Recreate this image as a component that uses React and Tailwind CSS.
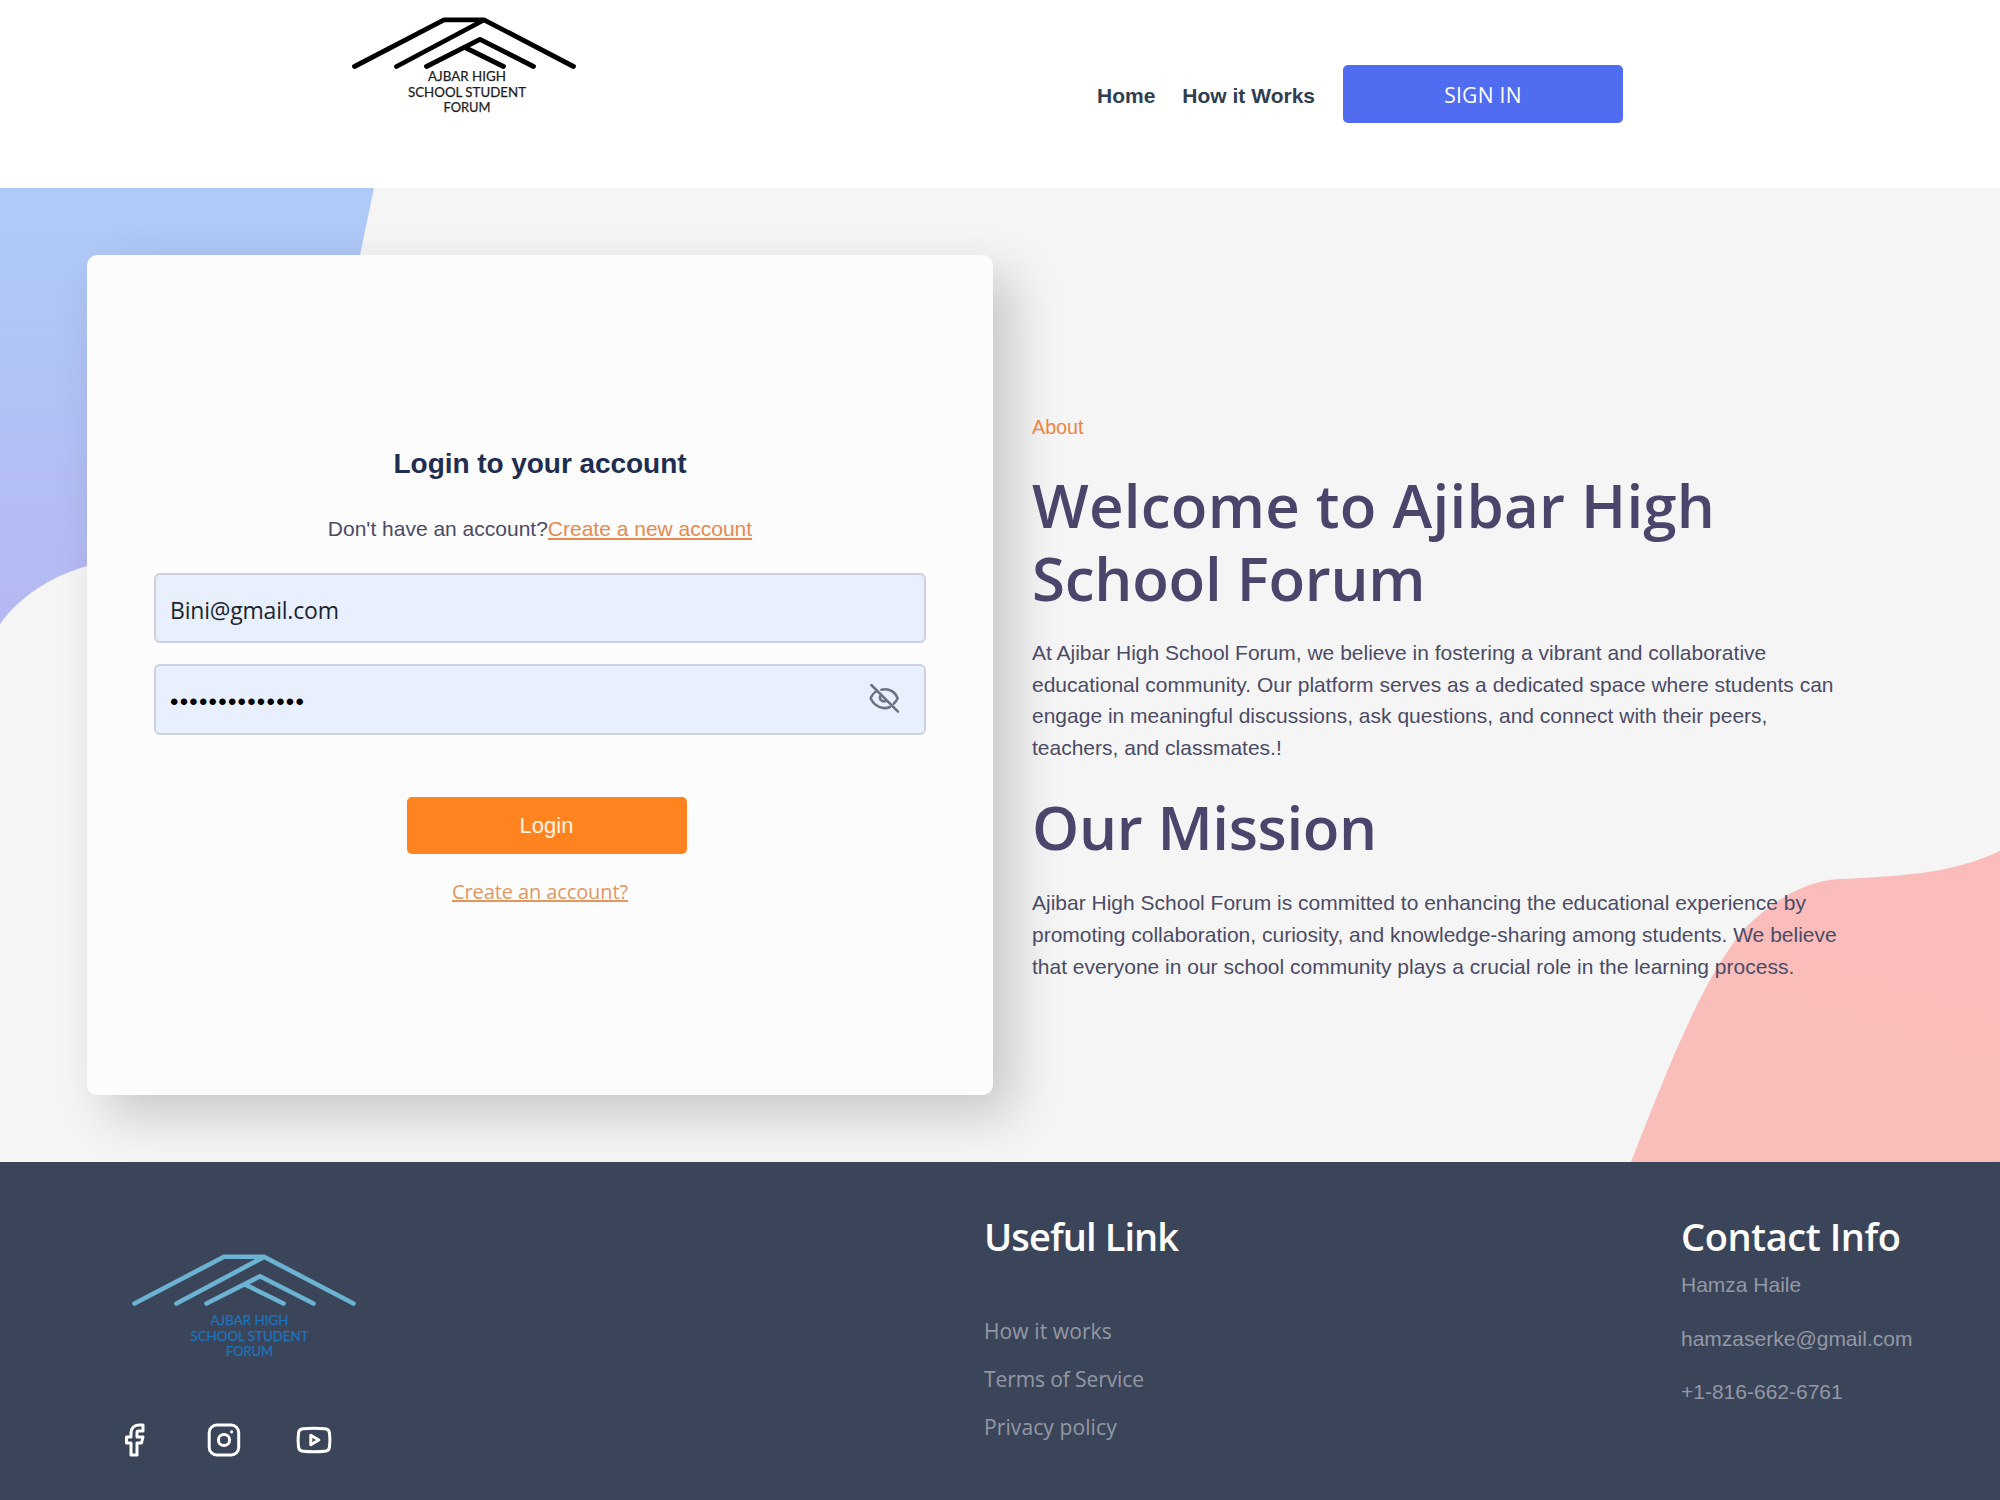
import React from "react";
import { Facebook } from "lucide-react";

function Logo({ stroke, fill, gap = 0, strokeWidth = 4.8, textX = 117 }) {
  const lines = [
    ["AJBAR HIGH", 66, 78],
    ["SCHOOL STUDENT", 81.7, 118],
    ["FORUM", 97.4, 47],
  ];
  return (
    <svg width="230" height="112" viewBox="0 0 230 112" className="block shrink-0">
      <g fill="none" stroke={stroke} strokeWidth={strokeWidth} strokeLinecap="round" strokeLinejoin="round">
        <path d="M4.500 51.500L94 4.800H134L223.500 51.500" />
        <path d="M46.500 51.500L133 5.500" />
        <path d="M76.500 51.500L130 24.300L183.500 51.500" />
        <path d="M115 32.500L153.500 51.500" />
      </g>
      <g fill={fill} stroke={fill} strokeWidth="0.250" fontFamily="Lato, sans-serif" fontSize="14" textAnchor="middle">
        {lines.map(([text, y, w]) => (
          <text key={text} x={textX} y={y + gap} textLength={w} lengthAdjust="spacingAndGlyphs">
            {text}
          </text>
        ))}
      </g>
    </svg>
  );
}

function EyeOff() {
  return (
    <svg width="31" height="31" viewBox="56 68 93 93" fill="none" stroke="#6b7280" strokeWidth="7.500" strokeLinecap="round">
      <path d="M63 74L143 154" />
      <path d="M93 88C118 82 136 97 142 114C139 121 135 126 130 130" />
      <path d="M80 92C71 97 64 105 61 114C72 139 98 149 119 140" />
      <path d="M92 103C84 114 92 127 107 122" />
    </svg>
  );
}

function Header() {
  return (
    <header className="flex h-[188px] items-center bg-white pl-[350px]">
      <div className="self-start pt-[15px]">
        <Logo stroke="#000" fill="#1c1c1c" />
      </div>
      <nav className="ml-[517px] flex items-center text-[21px] text-[#2f3e50]">
        <a className="pt-[3px] font-bold">Home</a>
        <a className="ml-[27px] pt-[3px] font-bold">How it Works</a>
        <button className="ml-[28px] h-[58px] w-[280px] rounded-[5px] bg-[#506cf0] pt-[3px] font-['Open_Sans',sans-serif] tracking-[0.3px] text-white">
          SIGN IN
        </button>
      </nav>
    </header>
  );
}

function LoginCard() {
  return (
    <div className="flex h-[840px] w-[906px] shrink-0 flex-col items-center rounded-[10px] bg-[#fcfcfc] px-[67px] pt-[191px] shadow-[20px_20px_50px_rgba(0,0,0,0.19)]">
      <h2 className="text-[28px] leading-[36px] font-bold tracking-[-0.05px] text-[#1f2d50]">Login to your account</h2>
      <div className="mt-[31px] flex text-[21px] leading-[32px] text-[#4b4b66]">
        <span>Don't have an account?</span>
        <a className="text-[#e58a4e] underline">Create a new account</a>
      </div>
      <div className="mt-[28px] flex h-[70px] w-full items-center rounded-[6px] border-2 border-[#ccd1db] bg-[#e8f0fe] px-[14px] pt-[4px] font-['Open_Sans',sans-serif] text-[23px] tracking-[-0.2px] text-[#1c2430]">
        Bini@gmail.com
      </div>
      <div className="mt-[21px] flex h-[71px] w-full items-center justify-between rounded-[6px] border-2 border-[#ccd1db] bg-[#e8f0fe] pr-[24px] pl-[14px] text-[24px] text-black">
        <span className="pt-[4px] tracking-[1.25px]">••••••••••••••</span>
        <span className="-mt-[3px]">
          <EyeOff />
        </span>
      </div>
      <button className="mt-[62px] ml-[13px] h-[57px] w-[280px] rounded-[5px] bg-[#ff841f] text-[22px] text-[#fff5e0]">Login</button>
      <a className="mt-[23px] font-['Open_Sans',sans-serif] text-[20px] leading-[30px] tracking-[-0.1px] text-[#e29660] underline">
        Create an account?
      </a>
    </div>
  );
}

function About() {
  return (
    <div className="ml-[39px] w-[830px] pt-[157px] text-[#4b4b66]">
      <p className="text-[19.700px] leading-[30px] text-[#ed8441]">About</p>
      <h1 className="mt-[27px] font-['Open_Sans',sans-serif] text-[60px] leading-[73px] font-semibold text-[#4b456c]">
        <span className="tracking-[0.250px]">Welcome to Ajibar High</span>
        <br />
        <span className="tracking-[-0.250px]">School Forum</span>
      </h1>
      <p className="mt-[22px] text-[21px] leading-[31.600px]">
        At Ajibar High School Forum, we believe in fostering a vibrant and collaborative
        <br />
        educational community. Our platform serves as a dedicated space where students can
        <br />
        engage in meaningful discussions, ask questions, and connect with their peers,
        <br />
        teachers, and classmates.!
      </p>
      <h1 className="mt-[28px] font-['Open_Sans',sans-serif] text-[60px] leading-[73px] font-semibold tracking-[-0.350px] text-[#4b456c]">
        Our Mission
      </h1>
      <p className="mt-[23px] text-[21px] leading-[31.600px]">
        Ajibar High School Forum is committed to enhancing the educational experience by
        <br />
        promoting collaboration, curiosity, and knowledge-sharing among students. We believe
        <br />
        that everyone in our school community plays a crucial role in the learning process.
      </p>
    </div>
  );
}

function Blobs() {
  return (
    <>
      <svg className="absolute top-0 left-0" width="400" height="500" viewBox="0 0 400 500">
        <defs>
          <linearGradient id="blue" x1="0" y1="0" x2="0" y2="1">
            <stop offset="0" stopColor="#aecbf7" />
            <stop offset="1" stopColor="#b5b8f2" />
          </linearGradient>
        </defs>
        <path d="M0 0H374L360 67L250 370L87 378C52 388 20 408 0 436Z" fill="url(#blue)" />
      </svg>
      <svg className="absolute right-0 bottom-0" width="400" height="400" viewBox="0 0 400 400">
        <defs>
          <linearGradient id="pink" x1="1" y1="0" x2="0.600" y2="1">
            <stop offset="0" stopColor="#fbbcbc" />
            <stop offset="1" stopColor="#f9beb9" />
          </linearGradient>
        </defs>
        <path d="M400 89C355 110 310 114 240 117C205 118 170 141 145 166C105 212 70 300 31 400H400Z" fill="url(#pink)" />
      </svg>
    </>
  );
}

function Footer() {
  return (
    <footer className="flex h-[338px] overflow-hidden bg-[#3b4559] text-[21px] text-[#9398a4]">
      <div className="w-[984px] pt-[90px] pl-[124px]">
        <div className="ml-[5.500px]">
          <Logo stroke="#6cb2d2" fill="#1d74bd" gap={7} strokeWidth={4.6} textX={119.5} />
        </div>
        <div className="mt-[58px] flex h-[36px] items-center text-white">
          <Facebook size={36} strokeWidth={2} className="-ml-[8px]" />
          <svg className="ml-[55px]" width="34" height="34" viewBox="0 0 34 34" fill="none" stroke="currentColor" strokeWidth="3">
            <rect x="2.200" y="2" width="29.500" height="30" rx="7.500" />
            <circle cx="17" cy="17" r="5.600" />
            <circle cx="24.600" cy="8.800" r="1.600" fill="currentColor" stroke="none" />
          </svg>
          <svg className="ml-[55px]" width="36" height="28" viewBox="0 0 36 28" fill="none" stroke="currentColor" strokeWidth="3" strokeLinejoin="round">
            <path d="M7 2.800Q18 1.800 29 2.800Q33 3.100 33.500 7Q34.300 14 33.500 21Q33 24.900 29 25.200Q18 26.200 7 25.200Q3 24.900 2.500 21Q1.700 14 2.500 7Q3 3.100 7 2.800Z" />
            <path d="M14.800 9.300V18.700L22.800 14Z" />
          </svg>
        </div>
      </div>
      <div className="w-[697px] pt-[49px] font-['Open_Sans',sans-serif]">
        <h3 className="text-[38px] leading-[50px] font-semibold tracking-[-0.9px] text-white">Useful Link</h3>
        <div className="mt-[46px] flex flex-col leading-[48px]">
          <a className="tracking-[0.1px]">How it works</a>
          <a className="tracking-[-0.1px]">Terms of Service</a>
          <a className="tracking-[0.1px]">Privacy policy</a>
        </div>
      </div>
      <div className="pt-[49px]">
        <h3 className="font-['Open_Sans',sans-serif] text-[38px] leading-[50px] font-semibold tracking-[-0.450px] text-white">Contact Info</h3>
        <div className="-mt-[3px] flex flex-col leading-[53.500px]">
          <a>Hamza Haile</a>
          <a>hamzaserke@gmail.com</a>
          <a>+1-816-662-6761</a>
        </div>
      </div>
    </footer>
  );
}

export default function App() {
  return (
    <div className="h-[1500px] w-[2000px] overflow-hidden font-['Liberation_Sans',Arial,sans-serif]">
      <Header />
      <main className="relative h-[974px] overflow-hidden bg-[#f5f5f5]">
        <Blobs />
        <div className="relative flex pt-[67px] pl-[87px]">
          <LoginCard />
          <About />
        </div>
      </main>
      <Footer />
    </div>
  );
}
